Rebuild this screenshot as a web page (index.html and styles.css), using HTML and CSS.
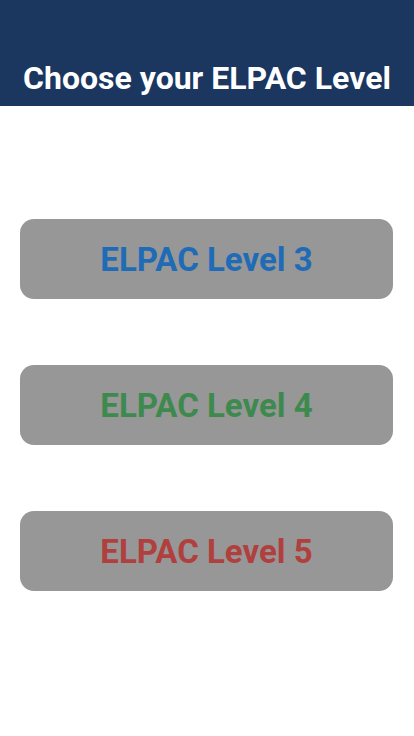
FILE: index.html
```html
<!DOCTYPE html>
<html>
<head>
<meta charset="utf-8">
<link rel="stylesheet" href="styles.css">
</head>
<body>
<header class="top">
  <h1 class="title">Choose your ELPAC Level</h1>
</header>
<main class="levels">
  <button class="level level-3">ELPAC Level 3</button>
  <button class="level level-4">ELPAC Level 4</button>
  <button class="level level-5">ELPAC Level 5</button>
</main>
</body>
</html>
```
FILE: styles.css
```css
html, body {
  margin: 0;
  padding: 0;
  background: #ffffff;
  font-family: Roboto, "Liberation Sans", sans-serif;
}
.top {
  background: #1b365f;
  height: 106px;
  display: flex;
  align-items: flex-end;
  justify-content: center;
  box-sizing: border-box;
  padding-bottom: 8px;
}
.title {
  margin: 0;
  color: #ffffff;
  font-size: 32px;
  font-weight: 700;
  line-height: 40px;
}
.levels {
  display: flex;
  flex-direction: column;
  gap: 66px;
  padding: 113px 21px 0 20px;
}
.level {
  height: 80px;
  border: none;
  border-radius: 14px;
  background: #979797;
  font-family: Roboto, "Liberation Sans", sans-serif;
  font-size: 33px;
  font-weight: 700;
  padding: 0;
}
.level-3 { color: #1f6bb6; }
.level-4 { color: #3e8a4e; }
.level-5 { color: #b0403e; }
```
